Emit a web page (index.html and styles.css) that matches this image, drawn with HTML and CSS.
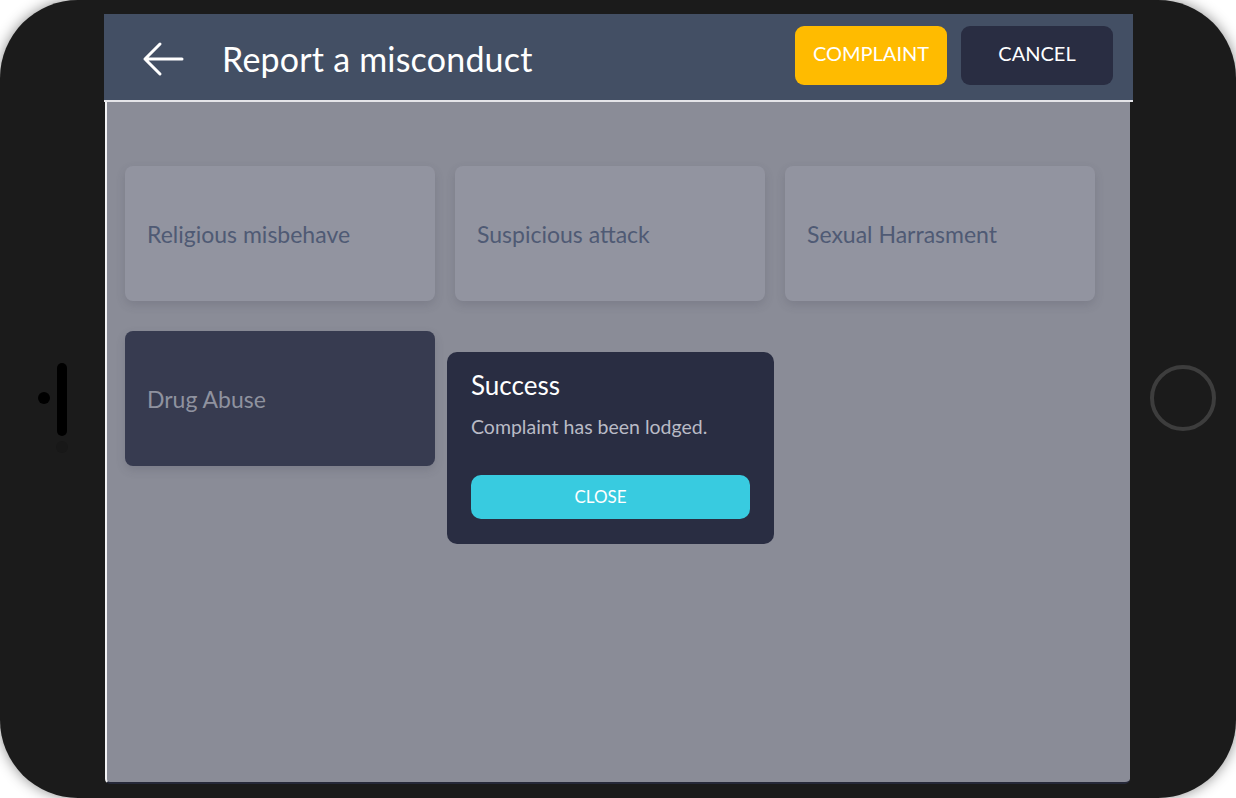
FILE: index.html
```html
<!DOCTYPE html>
<html>
<head>
<meta charset="utf-8">
<link rel="stylesheet" href="styles.css">
</head>
<body>
<div class="device">
  <div class="side-left">
    <span class="dot"></span>
    <span class="bar"></span>
    <span class="faint"></span>
  </div>
  <div class="screen">
    <header class="header">
      <svg class="back" width="42" height="36" viewBox="0 0 42 36">
        <path d="M40 18 H3 M18 3 L3 18 L18 33" fill="none" stroke="#fff" stroke-width="3" stroke-linecap="round" stroke-linejoin="round"/>
      </svg>
      <h1 class="title">Report a misconduct</h1>
      <div class="actions">
        <button class="btn btn-yellow">COMPLAINT</button>
        <button class="btn btn-dark">CANCEL</button>
      </div>
    </header>
    <main class="content">
      <div class="grid">
        <div class="card">Religious misbehave</div>
        <div class="card">Suspicious attack</div>
        <div class="card">Sexual Harrasment</div>
        <div class="card card-selected">Drug Abuse</div>
      </div>
      <div class="dialog">
        <div class="dialog-title">Success</div>
        <div class="dialog-text">Complaint has been lodged.</div>
        <button class="dialog-btn">CLOSE</button>
      </div>
    </main>
  </div>
  <div class="side-right">
    <span class="home"></span>
  </div>
</div>
</body>
</html>
```
FILE: styles.css
```css
* { box-sizing: border-box; }
html, body { margin: 0; padding: 0; }
body {
  width: 1236px;
  height: 798px;
  background: #fff;
  overflow: hidden;
  font-family: Lato, "Open Sans", sans-serif;
}
.device {
  width: 1236px;
  height: 798px;
  background: #1b1b1b;
  border-radius: 78px;
  box-shadow: 0 0 14px rgba(0,0,0,0.45);
  display: flex;
  padding: 14px 0 14px 0;
}
.side-left {
  width: 104px;
  flex: none;
  position: relative;
}
.side-left .dot {
  position: absolute;
  left: 38px; top: 378px;
  width: 12px; height: 12px;
  border-radius: 50%;
  background: #000;
}
.side-left .bar {
  position: absolute;
  left: 57px; top: 349px;
  width: 10px; height: 73px;
  border-radius: 5px;
  background: #000;
}
.side-left .faint {
  position: absolute;
  left: 56px; top: 427px;
  width: 12px; height: 12px;
  border-radius: 50%;
  background: #181818;
}
.screen {
  width: 1029px;
  flex: none;
  display: flex;
  flex-direction: column;
}
.header {
  height: 88px;
  background: #434f64;
  border-bottom: 2px solid #e4e4e8;
  display: flex;
  align-items: center;
  padding: 0 20px 0 38px;
  flex: none;
}
.back { flex: none; margin-top: 4px; }
.title {
  margin: 0 0 0 38px;
  color: #fff;
  font-weight: 400;
  font-size: 34px;
  letter-spacing: 0.2px;
  flex: 1;
  margin-top: 2px;
}
.actions { display: flex; gap: 14px; align-self: flex-start; margin-top: 12px; }
.btn {
  width: 152px;
  height: 59px;
  border: none;
  border-radius: 9px;
  color: #fff;
  font-family: inherit;
  font-size: 20px;
  font-weight: 400;
  padding: 0 0 5px 0;
}
.btn-yellow { background: #ffbb00; }
.btn-dark { background: #292d42; }
.content {
  flex: 1;
  width: 1025px;
  margin-left: 1px;
  background: #8a8c97;
  border-left: 2px solid #f2f2f4;
  border-bottom: 2px solid #262939;
  border-radius: 0 0 5px 5px;
  position: relative;
  padding: 64px 0 0 18px;
}
.grid {
  display: grid;
  grid-template-columns: repeat(3, 310px);
  grid-auto-rows: 135px;
  gap: 30px 20px;
}
.card {
  background: #9294a0;
  border-radius: 8px;
  box-shadow: 0 4px 10px rgba(60,62,75,0.18);
  display: flex;
  align-items: center;
  padding: 0 22px;
  font-size: 23px;
  color: #4f5a74;
}
.card-selected {
  background: #373b50;
  color: #8f929f;
}
.dialog {
  position: absolute;
  left: 340px;
  top: 250px;
  width: 327px;
  height: 192px;
  background: #292d42;
  border-radius: 10px;
  padding: 16px 24px;
}
.dialog-title {
  color: #fff;
  font-size: 26px;
  line-height: 34px;
}
.dialog-text {
  margin-top: 12px;
  color: #b9bbc6;
  font-size: 19.5px;
  line-height: 26px;
}
.dialog-btn {
  margin-top: 35px;
  width: 279px;
  height: 44px;
  border: none;
  border-radius: 10px;
  background: #38cbe0;
  color: #fff;
  font-family: inherit;
  font-size: 17px;
  padding: 0 20px 2px 0;
}
.side-right {
  flex: 1;
  position: relative;
}
.side-right .home {
  position: absolute;
  left: 17px; top: 351px;
  width: 66px; height: 66px;
  border-radius: 50%;
  border: 4px solid #3d3d3d;
}
```
